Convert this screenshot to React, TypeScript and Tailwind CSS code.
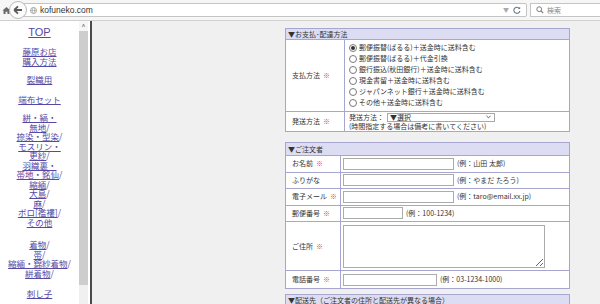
import React from 'react';

type Part = [string, boolean];

const navTop: Part[][] = [[['藤原お店', true]], [['購入方法', true]]];

const fabricLines: Part[][] = [
  [['絣・縞・', true]],
  [['無地', true], ['/', false]],
  [['捺染・型染', true], ['/', false]],
  [['モスリン・', true]],
  [['更紗', true], ['/', false]],
  [['羽織裏・', true]],
  [['帯地・銘仙', true], ['/', false]],
  [['縮緬', true], ['/', false]],
  [['大島', true], ['/', false]],
  [['麻', true], ['/', false]],
  [['ボロ[襤褸]', true], ['/', false]],
  [['その他', true]],
];

const kimonoLines: Part[][] = [
  [['着物', true], ['/', false]],
  [['帯', true], ['/', false]],
  [['縮緬・錦紗着物', true], ['/', false]],
  [['絣着物', true], ['/', false]],
];

const payments = [
  '郵便振替(ぱるる)＋送金時に送料含む',
  '郵便振替(ぱるる)＋代金引換',
  '銀行振込(秋田銀行)＋送金時に送料含む',
  '現金書留＋送金時に送料含む',
  'ジャパンネット銀行＋送金時に送料含む',
  'その他＋送金時に送料含む',
];

const NavLines = ({ lines, className }: { lines: Part[][]; className?: string }) => (
  <div className={className}>
    {lines.map((line, i) => (
      <div key={i} className="leading-[9.5px] h-[9.5px]">
        {line.map(([t, link], j) =>
          link ? (
            <span key={j} className="underline underline-offset-1">{t}</span>
          ) : (
            <span key={j}>{t}</span>
          )
        )}
      </div>
    ))}
  </div>
);

const Star = () => <span className="text-[#e0405e] ml-[3px]">※</span>;

const Radio = ({ on }: { on?: boolean }) => (
  <span className="w-[8px] h-[8px] rounded-full border border-[#7a7a7a] bg-white flex items-center justify-center shrink-0">
    {on && <span className="w-[4px] h-[4px] rounded-full bg-[#333]" />}
  </span>
);

const Field = ({ label, star, w, hint }: { label: string; star?: boolean; w: string; hint: string }) => (
  <div className="flex h-[16.5px] border-b border-[#a6a6d0]">
    <div className="w-[55px] shrink-0 border-r border-[#a6a6d0] flex items-center pl-[6px]">
      {label}
      {star && <Star />}
    </div>
    <div className="flex items-center pl-[2px] gap-[3px]">
      <input readOnly className={`${w} h-[12px] border border-[#ababab] bg-white`} />
      <span>{hint}</span>
    </div>
  </div>
);

const App = () => {
  return (
    <div className="w-[600px] h-[304px] overflow-hidden bg-white flex flex-col font-['Noto_Sans_CJK_JP',sans-serif]">
      {/* browser toolbar */}
      <div className="h-[21px] shrink-0 flex items-center bg-[#f6f6f6] border-b border-[#d0d0d0] relative">
        <svg width="9" height="9" viewBox="0 0 10 10" className="ml-[2px]">
          <path d="M5 1 L9.5 5 L8.3 5 L8.3 9 L6 9 L6 6.3 L4 6.3 L4 9 L1.7 9 L1.7 5 L0.5 5 Z" fill="#6b6b6b" />
        </svg>
        <div className="ml-[4px] flex-1 h-[14px] border border-[#c4c4c4] bg-white rounded-r-[2px] flex items-center relative">
          <div className="absolute left-[-7px] top-[-3px] w-[18px] h-[18px] rounded-full border border-[#b9b9b9] bg-[#fbfbfb] flex items-center justify-center">
            <svg width="10" height="10" viewBox="0 0 10 10">
              <path d="M1.2 5 L5 1.4 M1.2 5 L5 8.6 M1.2 5 L9 5" stroke="#5a5a5a" strokeWidth="1.8" fill="none" />
            </svg>
          </div>
          <svg width="7" height="7" viewBox="0 0 10 10" className="ml-[14px]">
            <circle cx="5" cy="5" r="4.3" fill="none" stroke="#9a9a9a" strokeWidth="1.2" />
            <path d="M0.8 5 H9.2 M5 0.8 C2.5 3 2.5 7 5 9.2 M5 0.8 C7.5 3 7.5 7 5 9.2" stroke="#9a9a9a" strokeWidth="0.9" fill="none" />
          </svg>
          <span className="ml-[3px] text-[8.5px] text-[#333] font-['Liberation_Sans',sans-serif] leading-none">kofuneko.com</span>
          <span className="ml-auto text-[6px] text-[#aaa] leading-none">▼</span>
          <svg width="8" height="8" viewBox="0 0 10 10" className="ml-[4px] mr-[5px]">
            <path d="M8 3.2 A3.8 3.8 0 1 0 8.6 6" stroke="#6a7a8a" strokeWidth="1.4" fill="none" />
            <path d="M6 3.6 L9 3.6 L9 0.8 Z" fill="#6a7a8a" />
          </svg>
        </div>
        <div className="ml-[3px] w-[70px] h-[14px] border border-[#c4c4c4] border-r-0 bg-white flex items-center">
          <svg width="8" height="8" viewBox="0 0 10 10" className="ml-[5px]">
            <circle cx="4" cy="4" r="3" fill="none" stroke="#777" strokeWidth="1.2" />
            <path d="M6.2 6.2 L9 9" stroke="#777" strokeWidth="1.4" />
          </svg>
          <span className="ml-[3px] text-[7px] text-[#888] leading-none">検索</span>
        </div>
      </div>

      <div className="flex flex-1 min-h-0">
        {/* left frame */}
        <div className="w-[90px] shrink-0 bg-white flex">
          <div className="w-[79px] shrink-0 flex flex-col items-center text-center text-[8.5px] text-[#5648a4]">
            <div className="mt-[5px] text-[11px] leading-[12px] underline underline-offset-1 font-['Liberation_Sans',sans-serif]">TOP</div>
            <NavLines lines={navTop} className="mt-[9px]" />
            <NavLines lines={[[['裂織用', true]]]} className="mt-[9px]" />
            <NavLines lines={[[['端布セット', true]]]} className="mt-[10px]" />
            <NavLines lines={fabricLines} className="mt-[9px]" />
            <NavLines lines={kimonoLines} className="mt-[13px]" />
            <NavLines lines={[[['刺し子', true]]]} className="mt-[11px]" />
          </div>
          <div className="w-[9px] shrink-0 flex flex-col bg-[#f0f0f0]">
            <div className="h-[10px] bg-[#f6f6f6] flex items-center justify-center text-[7px] text-[#555] leading-none">^</div>
            <div className="h-[254px] bg-[#cdcdcd]" />
          </div>
        </div>
        <div className="w-[2px] shrink-0 bg-[#4a4a4a]" />

        {/* right frame */}
        <div className="flex-1 bg-[#f0f0f0] text-[7px] text-[#333] leading-[11px]">
          <div className="ml-[193px] mt-[7px] w-[285px]">
            {/* table 1 */}
            <div className="border border-[#a6a6d0] bg-white">
              <div className="h-[11px] bg-[#dcdcf2] border-b border-[#a6a6d0] pl-[2px] flex items-center">▼お支払･配達方法</div>
              <div className="flex border-b border-[#a6a6d0]">
                <div className="w-[59px] shrink-0 border-r border-[#a6a6d0] flex items-center pl-[6px]">
                  支払方法
                  <Star />
                </div>
                <div className="pt-[2px] pb-[3px] pl-[4px]">
                  {payments.map((p, i) => (
                    <div key={i} className="h-[11px] flex items-center gap-[2px]">
                      <Radio on={i === 0} />
                      <span>{p}</span>
                    </div>
                  ))}
                </div>
              </div>
              <div className="flex h-[19px]">
                <div className="w-[59px] shrink-0 border-r border-[#a6a6d0] flex items-center pl-[6px]">
                  発送方法
                  <Star />
                </div>
                <div className="pl-[4px] flex flex-col justify-center leading-[9px]">
                  <div className="flex items-center">
                    発送方法：
                    <div className="ml-[3px] w-[108px] h-[9px] border border-[#a9a9a9] bg-white flex items-center pl-[2px]">
                      ▼選択
                      <svg width="5" height="4" viewBox="0 0 6 4" className="ml-auto mr-[3px]">
                        <path d="M0.5 0.5 L3 3 L5.5 0.5" stroke="#444" strokeWidth="1" fill="none" />
                      </svg>
                    </div>
                  </div>
                  <div>(時間指定する場合は備考に書いてください)</div>
                </div>
              </div>
            </div>

            {/* table 2 */}
            <div className="mt-[10px] border border-[#a6a6d0] bg-white">
              <div className="h-[13px] bg-[#dcdcf2] border-b border-[#a6a6d0] pl-[2px] flex items-center">▼ご注文者</div>
              <Field label="お名前" star w="w-[111px]" hint="(例：山田 太郎)" />
              <Field label="ふりがな" w="w-[111px]" hint="(例：やまだ たろう)" />
              <Field label="電子メール" star w="w-[111px]" hint="(例：taro@email.xx.jp)" />
              <Field label="郵便番号" star w="w-[60px]" hint="(例：100-1234)" />
              <div className="flex h-[49px] border-b border-[#a6a6d0]">
                <div className="w-[55px] shrink-0 border-r border-[#a6a6d0] flex items-center pl-[6px]">
                  ご住所
                  <Star />
                </div>
                <div className="flex items-center pl-[2px]">
                  <textarea readOnly className="w-[202px] h-[43px] border border-[#ababab] bg-white block" />
                </div>
              </div>
              <div className="flex h-[17px]">
                <div className="w-[55px] shrink-0 border-r border-[#a6a6d0] flex items-center pl-[6px]">
                  電話番号
                  <Star />
                </div>
                <div className="flex items-center pl-[2px] gap-[3px]">
                  <input readOnly className="w-[94px] h-[12px] border border-[#ababab] bg-white" />
                  <span>(例：03-1234-1000)</span>
                </div>
              </div>
            </div>

            {/* table 3 */}
            <div className="mt-[5px] border border-[#a6a6d0] bg-white">
              <div className="h-[12px] bg-[#dcdcf2] border-b border-[#a6a6d0] pl-[2px] flex items-center">▼配送先（ご注文者の住所と配送先が異なる場合）</div>
              <div className="h-[20px]" />
            </div>
          </div>
        </div>
      </div>
    </div>
  );
};

export default App;
